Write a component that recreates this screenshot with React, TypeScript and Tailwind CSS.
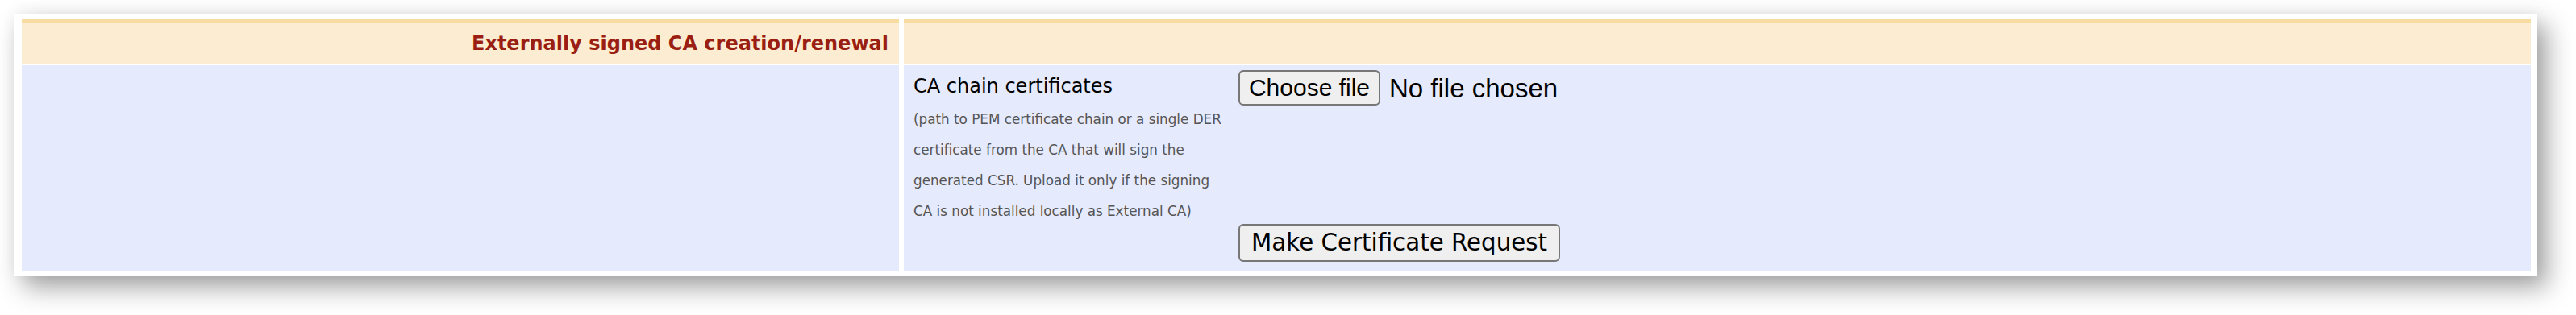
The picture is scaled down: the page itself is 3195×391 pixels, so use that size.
import React from "react";

const verdana = "font-['Verdana','DejaVu_Sans',sans-serif]";

function FileInput() {
  return (
    <div className="flex items-center gap-[11px] font-['Liberation_Sans',Arial,sans-serif] text-black">
      <button className="h-[44px] w-[176px] rounded-[6px] border-2 border-[#777] bg-[#efefef] text-[30px] leading-none">
        Choose file
      </button>
      <span className="text-[33px] leading-none">No file chosen</span>
    </div>
  );
}

export default function App() {
  return (
    <div className="min-h-screen bg-white pl-[17px] pt-[17px]">
      <div className="w-[3130px] bg-white pb-[6px] pl-[10px] pr-[8px] pt-[6px] shadow-[12px_14px_30px_rgba(0,0,0,0.36),0_0_18px_rgba(0,0,0,0.05)]">
        <div className={`grid grid-cols-[1088px_1fr] gap-x-[6px] gap-y-[2px] ${verdana}`}>
          <div className="flex h-[56px] items-center justify-end border-t-[6px] border-[#f9dca2] bg-[#fcedd2] pr-[13px]">
            <span className="text-[24px] font-bold text-[#9a1f12]">Externally signed CA creation/renewal</span>
          </div>
          <div className="h-[56px] border-t-[6px] border-[#f9dca2] bg-[#fcedd2]" />

          <div className="h-[256px] bg-[#e5eafd]" />
          <div className="flex h-[256px] bg-[#e5eafd] pl-[12px] pt-[6px]">
            <div className="w-[403px] shrink-0 pt-[6px]">
              <div className="text-[24px] leading-[28px] text-black">CA chain certificates</div>
              <p className="mt-[8px] text-[16.8px] leading-[38px] text-[#555]">
                (path to PEM certificate chain or a single DER
                <br />
                certificate from the CA that will sign the
                <br />
                generated CSR. Upload it only if the signing
                <br />
                CA is not installed locally as External CA)
              </p>
            </div>
            <div className="flex flex-col items-start">
              <FileInput />
              <button className="mt-[147px] h-[47px] rounded-[6px] border-2 border-[#777] bg-[#efefef] px-[14px] text-[29.3px] leading-none text-black">
                Make Certificate Request
              </button>
            </div>
          </div>
        </div>
      </div>
    </div>
  );
}
